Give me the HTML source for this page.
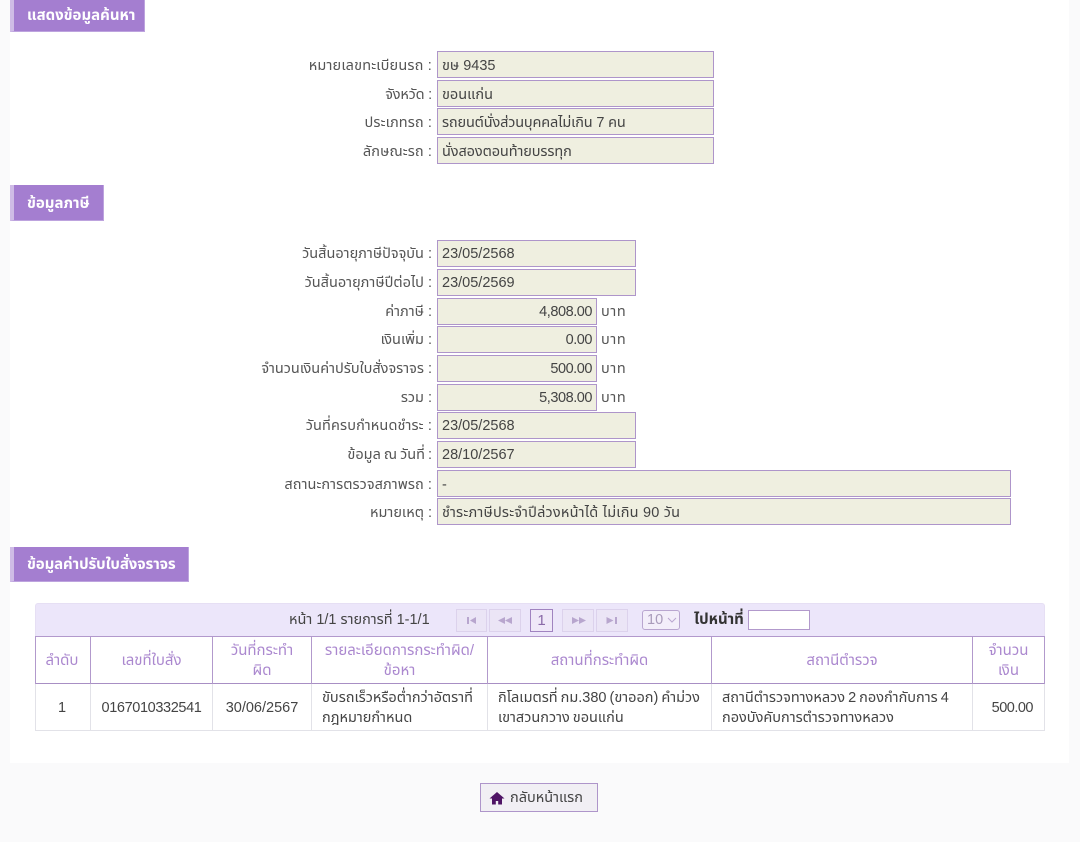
<!DOCTYPE html>
<html lang="th"><head><meta charset="utf-8"><title>ข้อมูล</title>
<style>
html,body{margin:0;padding:0}
body{width:1080px;height:842px;position:relative;overflow:hidden;background:#fafafb;font-family:"Liberation Sans","Noto Sans Thai","DejaVu Sans",sans-serif;font-size:14.5px;color:#444}
div{box-sizing:border-box;position:absolute;white-space:nowrap}
.panel{left:10px;top:0;width:1059px;height:763px;background:#fff}
.h{left:10px;background:#a47ed0;border-left:4px solid #cfbce6;border-right:1px solid #bda3de;border-bottom:1px solid #bda3de;color:#fff;font-weight:bold;font-size:15px;padding-left:13px}
.l{right:648px;width:300px;text-align:right;color:#555;height:27px;line-height:29px}
.i{left:437px;height:27px;line-height:27px;background:#efefe0;border:1px solid #ae95ca;padding-left:4px;color:#444}
.s1.l{line-height:31px}.s1.i{line-height:29px}
.r{text-align:right;padding:0 4px 0 0;letter-spacing:-.45px}
.b{left:601px;color:#555;height:27px;line-height:29px;letter-spacing:.6px}
.w1{width:277px}.w2{width:199px}.w3{width:160px}.w4{width:574px}
.tb{left:35px;top:603px;width:1010px;height:34px;background:#ece6fa;border:1px solid #e6dff4;border-bottom:none;border-radius:3px 3px 0 0}
.pg{top:609px;height:23px;border:1px solid #dcd2ec;background:#ebe5f6}
.pg svg{position:absolute;left:0;top:0}
.v{width:1px;background:#b299cc;top:636px;height:48px}
.v2{width:1px;background:#e2e2e8;top:684px;height:47px}
.hz{left:35px;width:1010px;height:1px}
.c{top:637px;height:48px;display:flex;align-items:center;justify-content:center;text-align:center;color:#ab88cf;font-size:15px;line-height:20px;white-space:normal}
.d{top:684px;height:47px;display:flex;align-items:center;color:#444;font-size:14.5px;line-height:20px;white-space:normal;word-spacing:-1px}
.ctr{justify-content:center}
.n{letter-spacing:-.38px}
</style></head><body>
<div class="panel"></div>

<div class="h" style="top:0;width:135px;height:32px;line-height:31px">แสดงข้อมูลค้นหา</div>
<div class="l s1" style="top:51px;letter-spacing:.18px">หมายเลขทะเบียนรถ :</div><div class="i s1 w1" style="top:51px">ขษ 9435</div>
<div class="l s1" style="top:80px;letter-spacing:-.2px">จังหวัด :</div><div class="i s1 w1" style="top:80px">ขอนแก่น</div>
<div class="l s1" style="top:108px;letter-spacing:.1px">ประเภทรถ :</div><div class="i s1 w1" style="top:108px;letter-spacing:-.16px">รถยนต์นั่งส่วนบุคคลไม่เกิน 7 คน</div>
<div class="l s1" style="top:137px;letter-spacing:.1px">ลักษณะรถ :</div><div class="i s1 w1" style="top:137px;letter-spacing:-.1px">นั่งสองตอนท้ายบรรทุก</div>

<div class="h" style="top:185px;width:94px;height:36px;line-height:37px">ข้อมูลภาษี</div>
<div class="l" style="top:240px">วันสิ้นอายุภาษีปัจจุบัน :</div><div class="i w2" style="top:240px">23/05/2568</div>
<div class="l" style="top:269px">วันสิ้นอายุภาษีปีต่อไป :</div><div class="i w2" style="top:269px">23/05/2569</div>
<div class="l" style="top:298px">ค่าภาษี :</div><div class="i w3 r" style="top:298px">4,808.00</div><div class="b" style="top:298px">บาท</div>
<div class="l" style="top:326px">เงินเพิ่ม :</div><div class="i w3 r" style="top:326px">0.00</div><div class="b" style="top:326px">บาท</div>
<div class="l" style="top:355px">จำนวนเงินค่าปรับใบสั่งจราจร :</div><div class="i w3 r" style="top:355px">500.00</div><div class="b" style="top:355px">บาท</div>
<div class="l" style="top:384px">รวม :</div><div class="i w3 r" style="top:384px">5,308.00</div><div class="b" style="top:384px">บาท</div>
<div class="l" style="top:412px;letter-spacing:.12px">วันที่ครบกำหนดชำระ :</div><div class="i w2" style="top:412px">23/05/2568</div>
<div class="l" style="top:441px;word-spacing:-1px">ข้อมูล ณ วันที่ :</div><div class="i w2" style="top:441px">28/10/2567</div>
<div class="l s1" style="top:470px;letter-spacing:.06px">สถานะการตรวจสภาพรถ :</div><div class="i s1 w4" style="top:470px">-</div>
<div class="l s1" style="top:498px">หมายเหตุ :</div><div class="i s1 w4" style="top:498px;letter-spacing:.2px">ชำระภาษีประจำปีล่วงหน้าได้ ไม่เกิน 90 วัน</div>

<div class="h" style="top:547px;width:179px;height:35px;line-height:36px;letter-spacing:-.1px">ข้อมูลค่าปรับใบสั่งจราจร</div>

<div class="tb"></div>
<div style="left:289px;top:609px;height:23px;line-height:22px;color:#444">หน้า 1/1 รายการที่ 1-1/1</div>
<div class="pg" style="left:456px;width:31px"><svg width="29" height="21" viewBox="0 0 29 21"><path d="M10 7h2v7h-2zM13 10.5l6-3.5v7z" fill="#b8a6ce"/></svg></div>
<div class="pg" style="left:489px;width:32px"><svg width="30" height="21" viewBox="0 0 30 21"><path d="M8 10.5l7-3.5v7zM15 10.5l7-3.5v7z" fill="#b8a6ce"/></svg></div>
<div class="pg" style="left:530px;width:23px;border:1px solid #a083c0;color:#8a6aa8;font-size:15px;line-height:21px;text-align:center;background:#efe8f8">1</div>
<div class="pg" style="left:562px;width:32px"><svg width="30" height="21" viewBox="0 0 30 21"><path d="M9 7l7 3.5-7 3.5zM16 7l7 3.5-7 3.5z" fill="#b8a6ce"/></svg></div>
<div class="pg" style="left:596px;width:32px"><svg width="30" height="21" viewBox="0 0 30 21"><path d="M9.5 7l7 3.5-7 3.5zM18 7h2v7h-2z" fill="#b8a6ce"/></svg></div>
<div style="left:642px;top:610px;width:38px;height:20px;border:1px solid #b9a6d0;border-radius:3px;background:#f3eefa;color:#a99bbb;line-height:18px;padding-left:4px;font-size:14.5px">10<svg style="position:absolute;left:24px;top:6px" width="10" height="6" viewBox="0 0 10 6"><path d="M1 1l4 4 4-4" fill="none" stroke="#b9a6d0"/></svg></div>
<div style="left:694px;top:609px;height:21px;line-height:21px;font-weight:bold;color:#333;font-size:15px">ไปหน้าที่</div>
<div style="left:748px;top:610px;width:62px;height:20px;background:#fff;border:1px solid #b299cc"></div>

<div class="hz" style="top:636px;background:#b299cc"></div>
<div class="hz" style="top:683px;background:#a88fc4"></div>
<div class="hz" style="top:730px;background:#e2e2e8"></div>
<div class="v" style="left:35px"></div><div class="v" style="left:90px"></div><div class="v" style="left:212px"></div><div class="v" style="left:311px"></div><div class="v" style="left:487px"></div><div class="v" style="left:711px"></div><div class="v" style="left:972px"></div><div class="v" style="left:1044px"></div>
<div class="v2" style="left:35px"></div><div class="v2" style="left:90px"></div><div class="v2" style="left:212px"></div><div class="v2" style="left:311px"></div><div class="v2" style="left:487px"></div><div class="v2" style="left:711px"></div><div class="v2" style="left:972px"></div><div class="v2" style="left:1044px"></div>

<div class="c" style="left:36px;width:52px">ลำดับ</div>
<div class="c" style="left:91px;width:121px">เลขที่ใบสั่ง</div>
<div class="c" style="left:213px;width:98px">วันที่กระทำ<br>ผิด</div>
<div class="c" style="left:312px;width:175px">รายละเอียดการกระทำผิด/<br>ข้อหา</div>
<div class="c" style="left:488px;width:223px">สถานที่กระทำผิด</div>
<div class="c" style="left:712px;width:260px">สถานีตำรวจ</div>
<div class="c" style="left:973px;width:71px">จำนวน<br>เงิน</div>

<div class="d ctr" style="left:36px;width:52px">1</div>
<div class="d ctr n" style="left:91px;width:121px">0167010332541</div>
<div class="d ctr" style="left:213px;width:98px">30/06/2567</div>
<div class="d" style="left:322px;width:160px">ขับรถเร็วหรือต่ำกว่าอัตราที่<br>กฎหมายกำหนด</div>
<div class="d" style="left:498px;width:208px">กิโลเมตรที่ กม.380 (ขาออก) คำม่วง<br>เขาสวนกวาง ขอนแก่น</div>
<div class="d" style="left:722px;width:240px">สถานีตำรวจทางหลวง 2 กองกำกับการ 4<br>กองบังคับการตำรวจทางหลวง</div>
<div class="d n" style="left:973px;width:60px;justify-content:flex-end;letter-spacing:-.5px">500.00</div>

<div style="left:480px;top:783px;width:118px;height:29px;border:1px solid #ae95ca;background:#f1eff4;color:#444;line-height:29px;padding-left:29px;font-size:14.5px">กลับหน้าแรก<svg style="position:absolute;left:8px;top:7px" width="16" height="14" viewBox="0 0 16 14"><path d="M8 1L0.5 7.5H3V13.5H6.8V10H9.2V13.5H13V7.5H15.5Z" fill="#4f1465"/></svg></div>
</body></html>
